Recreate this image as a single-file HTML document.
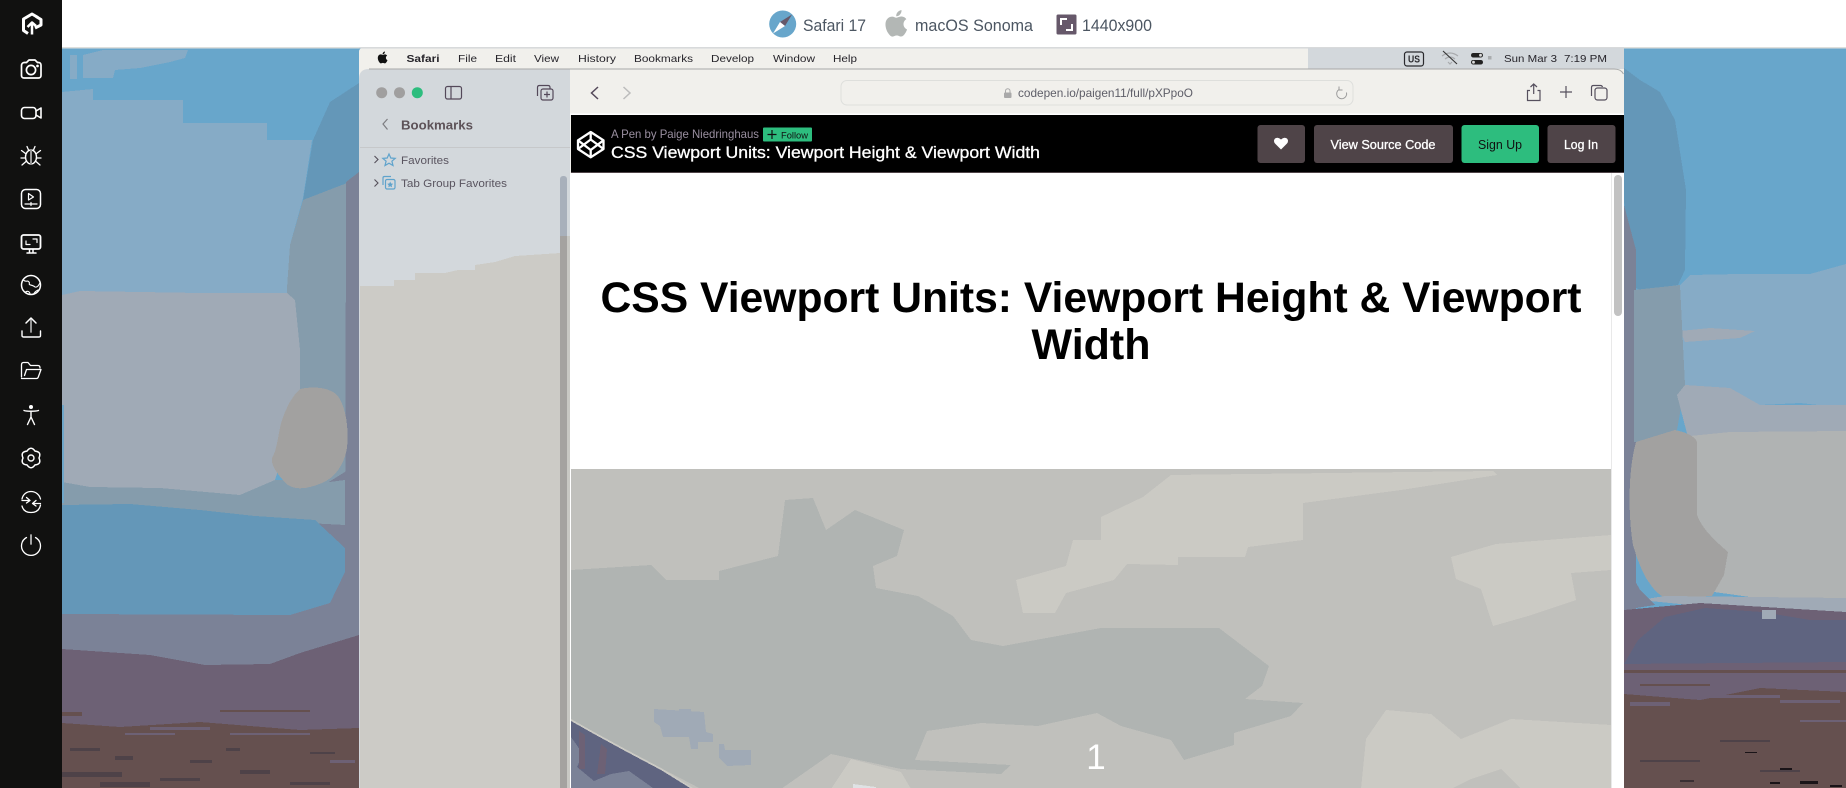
<!DOCTYPE html>
<html lang="en"><head><meta charset="utf-8"><title>Safari 17 macOS Sonoma</title>
<style>html,body{margin:0;padding:0;width:1846px;height:788px;overflow:hidden;background:#fff}svg{display:block}text{font-family:"Liberation Sans",sans-serif}</style></head>
<body>
<svg xmlns="http://www.w3.org/2000/svg" width="1846" height="788" viewBox="0 0 1846 788">
<!-- wallpaper -->
<rect x="62" y="48" width="1784" height="740" fill="#68a6cb"/>
<!-- left painting -->
<g shape-rendering="crispEdges">
<polygon fill="#86abc6" points="103,50 188,50 185,58 170,62 140,68 115,70 113,78 83,78 83,55"/>
<rect x="70" y="55" width="7" height="24" fill="#86abc6"/>
<polygon fill="#86abc6" points="62,92 93,89 93,100 183,100 183,123 267,123 267,140 312,140 303,198 290,245 287,288 287,300 62,300"/>
<polygon fill="#6497b8" points="359,83 330,102 313,140 303,200 359,200"/>
<polygon fill="#859cac" points="303,200 347,183 347,510 62,515 62,482 287,480 287,288 290,245"/>
<polygon fill="#7b8297" points="346,182 359,172 359,690 345,690"/>
<polygon fill="#7b8297" points="62,610 359,610 359,690 62,660"/>
<polygon fill="#7b8297" points="300,500 348,470 359,470 359,620 290,620"/>
<polygon fill="#a0aab6" points="62,295 80,291 200,293 287,293 295,300 300,350 300,400 275,480 240,495 160,488 90,487 62,482"/>
<path fill="#a2a1a0" d="M300 389C312 386 330 387 338 396 346 408 349 428 347 448 344 466 334 478 322 483 310 488 297 491 288 485 280 478 270 465 272 458 278 448 278 432 282 420 286 408 292 396 300 389Z"/>
<polygon fill="#859cac" points="62,482 90,487 160,488 240,495 322,483 345,480 345,525 62,510"/>
<path fill="#a2a1a0" d="M300 389C312 386 330 387 338 396 346 408 349 428 347 448 344 466 334 478 322 483 310 488 297 491 288 485 280 478 270 465 272 458 278 448 278 432 282 420 286 408 292 396 300 389Z"/>
<polygon fill="#6497b8" points="62,505 130,504 200,510 255,516 315,520 345,548 345,572 330,603 290,615 62,614"/>
<polygon fill="#6d6175" points="62,649 150,655 205,665 270,664 300,653 359,635 359,788 62,788"/>
<polygon fill="#65504f" points="62,723 120,727 200,722 300,730 359,728 359,788 62,788"/>
<rect x="62" y="712" width="20" height="4" fill="#65504f"/><rect x="220" y="710" width="90" height="2" fill="#65504f"/>
<rect x="150" y="727" width="60" height="3" fill="#6d6175"/><rect x="230" y="733" width="80" height="2" fill="#6d6175"/><rect x="125" y="733" width="50" height="2" fill="#6d6175"/><rect x="330" y="760" width="25" height="3" fill="#6d6175"/>
<rect x="70" y="748" width="30" height="3" fill="#4e4248"/><rect x="115" y="756" width="18" height="4" fill="#4e4248"/><rect x="190" y="760" width="22" height="3" fill="#4e4248"/><rect x="226" y="748" width="14" height="3" fill="#4e4248"/><rect x="62" y="772" width="60" height="5" fill="#4e4248"/><rect x="100" y="782" width="50" height="5" fill="#4e4248"/><rect x="160" y="778" width="40" height="3" fill="#4e4248"/><rect x="240" y="770" width="30" height="4" fill="#4e4248"/><rect x="290" y="782" width="40" height="3" fill="#4e4248"/><rect x="310" y="752" width="25" height="2" fill="#4e4248"/>
<rect x="62" y="405" width="2" height="98" fill="#6fa6c8"/>
<!-- right painting -->
<polygon fill="#6497b8" points="1624,68 1640,80 1660,92 1675,120 1686,190 1685,270 1678,285 1640,290 1630,285 1624,200"/>
<polygon fill="#86abc6" points="1680,285 1690,275 1740,274 1810,274 1846,264 1846,408 1800,403 1760,405 1730,388 1685,385"/>
<polygon fill="#a0aab6" points="1680,331 1710,328 1755,331 1740,338 1685,342"/>
<polygon fill="#7b8297" points="1624,205 1636,250 1636,640 1624,640"/>
<polygon fill="#859cac" points="1634,290 1680,285 1685,385 1677,430 1640,442 1634,442"/>
<polygon fill="#a0aab6" points="1677,395 1685,385 1730,388 1760,405 1846,405 1846,445 1690,445"/>
<polygon fill="#b0b3b3" points="1690,436 1730,432 1846,431 1846,600 1750,597 1700,590 1690,520"/>
<path fill="#a2a1a0" d="M1675 430C1685 432 1695 436 1697 442L1697 515C1702 530 1720 545 1728 552L1724 575 1712 596 1665 598C1650 590 1640 570 1633 545 1628 515 1628 470 1636 442Z"/>
<polygon fill="#a0aab6" points="1640,600 1665,596 1846,598 1846,618 1700,606"/>
<polygon fill="#7b8297" points="1624,560 1640,590 1655,605 1624,610"/>
<polygon fill="#6d6175" points="1624,610 1700,603 1846,612 1846,700 1624,700"/>
<polygon fill="#5f6480" points="1638,640 1665,617 1705,608 1762,612 1810,620 1846,620 1846,662 1624,664"/>
<rect x="1762" y="610" width="14" height="9" fill="#a0aab6"/>
<polygon fill="#65504f" points="1624,694 1700,700 1760,688 1846,692 1846,788 1624,788"/>
<rect x="1624" y="670" width="222" height="3" fill="#65504f"/><rect x="1640" y="684" width="70" height="2" fill="#65504f"/>
<rect x="1700" y="695" width="80" height="3" fill="#6d6175"/><rect x="1780" y="700" width="60" height="3" fill="#6d6175"/><rect x="1630" y="702" width="40" height="4" fill="#6d6175"/><rect x="1800" y="720" width="46" height="2" fill="#6d6175"/>
<rect x="1780" y="768" width="12" height="2" fill="#1a1418"/><rect x="1745" y="752" width="12" height="1" fill="#1a1418"/><rect x="1800" y="781" width="18" height="3" fill="#1a1418"/><rect x="1770" y="782" width="10" height="2" fill="#1a1418"/><rect x="1830" y="785" width="12" height="2" fill="#1a1418"/><rect x="1680" y="780" width="14" height="2" fill="#3a2f33"/><rect x="1640" y="760" width="60" height="2" fill="#4e4248"/><rect x="1720" y="740" width="50" height="2" fill="#4e4248"/><rect x="1760" y="770" width="40" height="2" fill="#4e4248"/>
</g>

<!-- top bar -->
<rect x="0" y="0" width="1846" height="47" fill="#fff"/>
<rect x="62" y="47" width="1784" height="1.5" fill="#dedfdc"/>
<circle cx="782.7" cy="24" r="13.5" fill="#68a6cb"/>
<polygon points="792,14.5 785,26 780,22" fill="#66586a"/><polygon points="773,33.5 780,22 785,26" fill="#fff"/>
<text x="803" y="31" font-size="16.5" fill="#4c5662" textLength="63" lengthAdjust="spacingAndGlyphs">Safari 17</text>
<g transform="translate(881.5,8) scale(1.29)" fill="#b3b7b5"><path d="M17.05 12.54c-.03-2.6 2.12-3.85 2.22-3.91-1.21-1.77-3.09-2.01-3.76-2.04-1.6-.16-3.12.94-3.93.94-.81 0-2.06-.92-3.39-.89-1.74.03-3.35 1.01-4.25 2.57-1.81 3.14-.46 7.8 1.3 10.35.86 1.25 1.89 2.65 3.24 2.6 1.3-.05 1.79-.84 3.36-.84s2.01.84 3.39.81c1.4-.02 2.28-1.27 3.14-2.53.99-1.45 1.4-2.85 1.42-2.93-.03-.01-2.72-1.04-2.74-4.13zM14.45 4.9c.72-.87 1.2-2.08 1.07-3.28-1.03.04-2.28.69-3.02 1.55-.66.77-1.24 2-1.09 3.18 1.15.09 2.33-.58 3.04-1.45z"/></g>
<text x="915" y="31" font-size="16.5" fill="#4c5662" textLength="118" lengthAdjust="spacingAndGlyphs">macOS Sonoma</text>
<rect x="1056.5" y="14.5" width="20" height="20" rx="1.5" fill="#66586a"/>
<path d="M1061 25V19H1067M1072 24V30H1066" fill="none" stroke="#fff" stroke-width="2"/>
<text x="1082" y="31" font-size="16.5" fill="#4c5662" textLength="70" lengthAdjust="spacingAndGlyphs">1440x900</text>

<!-- left dark rail -->
<rect x="0" y="0" width="62" height="788" fill="#111110"/>
<g fill="none" stroke="#fff" stroke-width="1.5" stroke-linecap="round" stroke-linejoin="round">
<path d="M38 17.5L32 14 23.5 19V30.5L28 33.5M35 28L41 25 41 19.5 36 16.5" stroke-width="3" stroke-linecap="butt"/>
<path d="M32 34.5V23M27.5 27L32 22.5 36 26" stroke-width="2.5" stroke-linecap="butt"/>
<path d="M24.5 62.5H26.5L29 60H35L37.5 62.5H38.5C40 62.5 41 63.5 41 65V75.5C41 77 40 78 38.5 78H24C22.5 78 21.5 77 21.5 75.5V65.5C21.5 63.5 23 62.5 24.5 62.5Z" stroke-width="1.7"/><circle cx="31" cy="70" r="4.6" stroke-width="1.7"/><circle cx="37.5" cy="66" r=".6" fill="#fff"/>
<rect x="21.5" y="107.5" width="14.5" height="11" rx="3" stroke-width="1.6"/><path d="M36 111L41 108V118L36 115" stroke-width="1.6"/>
<ellipse cx="31" cy="157" rx="5.5" ry="7" stroke-width="1.4"/><path d="M31 150V164" stroke="#9a9a9a" stroke-width="2"/><path d="M27 146.5L28.5 150M35 146.5L33.5 150M25.5 153.5L21.5 150.5M36.5 153.5L40.5 150.5M25.5 158H21M36.5 158H41M26 161.5L22 165M36 161.5L40 165" stroke-width="1.3"/>
<rect x="21.5" y="189.5" width="19" height="19" rx="4" stroke-width="1.5"/><path d="M28.5 193.5L33.5 197 28.5 200Z" stroke-width="1.2"/><path d="M25 204H37M31 202.5V205.5" stroke-width="1.2"/>
<rect x="21.5" y="235" width="19" height="14" rx="2" stroke-width="1.8"/><path d="M26 244.5H30M26 244.5V241M33 239H37V242.5" stroke-width="1.2"/><path d="M29.5 249.5V252.5M33 249.5V252.5M27 253H36" stroke-width="1.5"/>
<circle cx="31" cy="285" r="9.5" stroke-width="1.5"/><path d="M23.5 280C26 283 28 279 29.5 283 28 286 32 284 35 287 38 288 39 284 40 283M25.5 292.5C26 291 29 290.5 30 293.5M34 294C34 292 37 290.5 38 290" stroke-width="1.1"/>
<path d="M31 332V318.5" stroke="#a8a8a8" stroke-width="1.8"/><path d="M26 323L31 318 36 323" stroke-width="1.5"/><path d="M22 331V335.5C22 336.5 22.5 337 23.5 337H39C40 337 40.5 336.5 40.5 335.5V331" stroke-width="1.4"/>
<path d="M21.5 377V365C21.5 363.5 22.3 362.5 23.5 362.5H28L30.5 365.5H38C39.5 365.5 40 366.5 40 368" stroke-width="1.3"/><path d="M21.5 378.5H36.5C37.5 378.5 38 378 38.3 377L41 369.5H26.5L24.5 375.5" stroke-width="1.3"/>
<circle cx="31" cy="407" r="2" fill="#fff" stroke="none"/><path d="M24 410.5C27 411.5 35 411.5 38.5 410.5M31 411.5V417M31 417L27.5 424.5M31 417L34.5 424.5" stroke-width="1.4"/>
<path d="M27 451.1Q31 445.5 35 451.1Q41.8 451.75 39 458Q41.8 464.25 35 464.9Q31 470.5 27 464.9Q20.2 464.25 23 458Q20.2 451.75 27 451.1Z" stroke-width="1.5"/><circle cx="31" cy="458" r="3" stroke-width="1.4"/>
<path d="M22 499C23 494 27 491.5 31 491.5 36 491.5 39.5 495 40.5 499M40.5 505C39.5 510 36 512.5 31 512.5 26 512.5 23 510 22 506" stroke-width="1.3"/><path d="M22 500.5H30M26.5 497.5L30 500.5 26.5 503M40.5 503.5H32.5M36 500.5L32.5 503.5 36 506" stroke-width="1.3"/>
<path d="M26.5 537.5A9.5 9.5 0 1 0 35.5 537.5" stroke-width="1.3"/><path d="M31 535V544" stroke="#b5b5b5" stroke-width="1.8"/>
</g>

<!-- window: menu bar -->
<path d="M359 52Q359 48 363 48H1620Q1624 48 1624 52V788H359Z" fill="#f1f0ec"/>
<rect x="1308" y="48" width="316" height="21" fill="#d3d8dc"/>
<rect x="359" y="47.5" width="1265" height="1" fill="#d3d6da"/>
<g transform="translate(376,50.5) scale(.58)" fill="#111"><path d="M17.05 12.54c-.03-2.6 2.12-3.85 2.22-3.91-1.21-1.77-3.09-2.01-3.76-2.04-1.6-.16-3.12.94-3.93.94-.81 0-2.06-.92-3.39-.89-1.74.03-3.35 1.01-4.25 2.57-1.81 3.14-.46 7.8 1.3 10.35.86 1.25 1.89 2.65 3.24 2.6 1.3-.05 1.79-.84 3.36-.84s2.01.84 3.39.81c1.4-.02 2.28-1.27 3.14-2.53.99-1.45 1.4-2.85 1.42-2.93-.03-.01-2.72-1.04-2.74-4.13zM14.45 4.9c.72-.87 1.2-2.08 1.07-3.28-1.03.04-2.28.69-3.02 1.55-.66.77-1.24 2-1.09 3.18 1.15.09 2.33-.58 3.04-1.45z"/></g>
<g font-size="10.5" fill="#26242a">
<text x="406.5" y="62" font-weight="700" textLength="33" lengthAdjust="spacingAndGlyphs">Safari</text>
<text x="458" y="62" textLength="19" lengthAdjust="spacingAndGlyphs">File</text>
<text x="495" y="62" textLength="21" lengthAdjust="spacingAndGlyphs">Edit</text>
<text x="534" y="62" textLength="25" lengthAdjust="spacingAndGlyphs">View</text>
<text x="578" y="62" textLength="38" lengthAdjust="spacingAndGlyphs">History</text>
<text x="634" y="62" textLength="59" lengthAdjust="spacingAndGlyphs">Bookmarks</text>
<text x="711" y="62" textLength="43" lengthAdjust="spacingAndGlyphs">Develop</text>
<text x="773" y="62" textLength="42" lengthAdjust="spacingAndGlyphs">Window</text>
<text x="833" y="62" textLength="24" lengthAdjust="spacingAndGlyphs">Help</text>
<text x="1504" y="62" textLength="53" lengthAdjust="spacingAndGlyphs">Sun Mar 3</text>
<text x="1564" y="62" textLength="43" lengthAdjust="spacingAndGlyphs">7:19 PM</text>
</g>
<rect x="1404.5" y="52" width="19" height="14" rx="2.5" fill="none" stroke="#2a2a2e" stroke-width="1.2"/>
<text x="1408" y="62.5" font-size="10" font-weight="700" fill="#2a2a2e" textLength="12" lengthAdjust="spacingAndGlyphs">US</text>
<path d="M1442 56Q1450 50 1458 56M1445 59Q1450 55 1455 59M1448 62L1450 64 1452 62" fill="none" stroke="#a8aaad" stroke-width="1.2"/><path d="M1443 51L1457 64" stroke="#333" stroke-width="1.1"/>
<rect x="1471" y="53" width="12" height="4.5" rx="2.2" fill="#222"/><rect x="1471" y="60" width="12" height="4.5" rx="2.2" fill="#222"/><circle cx="1480.5" cy="55.2" r="1.4" fill="#ddd"/><circle cx="1473.5" cy="62.2" r="1.4" fill="#ddd"/>
<rect x="1488" y="56" width="3.5" height="3.5" fill="#a9acae"/>

<!-- window body -->
<path d="M359 79Q359 69 369 69H570V788H359Z" fill="#d3d8dc"/>
<path d="M570 69H1614Q1624 69 1624 79V114H570Z" fill="#f1f0ec"/>
<path d="M369 69H1614Q1621 69 1623.5 74" fill="none" stroke="#a8a9a9" stroke-width="1"/>
<polygon fill="#cccbc6" shape-rendering="crispEdges" points="360,286 394,286 394,280 415,280 415,273 445,273 458,270 475,270 475,265 495,262 515,256 560,253 560,788 360,788"/>
<circle cx="381.7" cy="92.7" r="5.5" fill="#a09f9f"/><circle cx="399.5" cy="92.7" r="5.5" fill="#a09f9f"/><circle cx="417.3" cy="92.7" r="5.5" fill="#2dbd7e"/>
<g fill="none" stroke="#54495a" stroke-width="1.2"><rect x="445.5" y="86.5" width="16" height="12.5" rx="2"/><path d="M451 87V99"/></g>
<g fill="none" stroke="#54495a" stroke-width="1.2"><path d="M537.5 96V87.5Q537.5 85.5 539.5 85.5H548Q550 85.5 550 87.5V88.5"/><rect x="541" y="89" width="12" height="11" rx="2"/><path d="M547 91.5V97.5M544 94.5H550"/></g>
<path d="M387.5 119L383 124 387.5 129.5" fill="none" stroke="#7c7c80" stroke-width="1.2"/>
<text x="401" y="129.5" font-size="13" font-weight="700" fill="#5d5258" textLength="72" lengthAdjust="spacingAndGlyphs">Bookmarks</text>
<rect x="360" y="147" width="210" height="1" fill="#c6c8ca"/>
<path d="M374.5 156L378 159.5 374.5 163M374.5 179.5L378 183 374.5 186.5" fill="none" stroke="#55505a" stroke-width="1.1"/>
<polygon points="389,154 390.8,158 395.2,158.4 391.9,161.2 393,165.5 389,163.2 385,165.5 386.1,161.2 382.8,158.4 387.2,158" fill="none" stroke="#5fa3cc" stroke-width="1.2"/>
<g fill="none" stroke="#5fa3cc" stroke-width="1.2"><path d="M383 185V178Q383 176.5 384.5 176.5H391"/><rect x="385.5" y="179.5" width="9.5" height="9.5" rx="1.5"/></g><polygon points="390.2,181.5 391.1,183.5 393.2,183.8 391.7,185.2 392.1,187.3 390.2,186.2 388.3,187.3 388.7,185.2 387.2,183.8 389.3,183.5" fill="#5fa3cc"/>
<text x="401" y="164" font-size="11" fill="#5a5560" textLength="48" lengthAdjust="spacingAndGlyphs">Favorites</text>
<text x="401" y="187" font-size="11" fill="#5a5560" textLength="106" lengthAdjust="spacingAndGlyphs">Tab Group Favorites</text>
<rect x="560" y="176" width="7" height="70" rx="3" fill="#a8b0bb"/><rect x="560" y="236" width="7" height="552" fill="#a4a2a0"/>
<rect x="567" y="236" width="3" height="552" fill="#c8c8c4"/>
<!-- toolbar -->
<path d="M598 87L591.5 93 598 99" fill="none" stroke="#54495a" stroke-width="1.5"/>
<path d="M623.5 87L630 93 623.5 99" fill="none" stroke="#bcbcbc" stroke-width="1.5"/>
<rect x="841" y="80.5" width="512" height="24.5" rx="6" fill="#f1f0ec" stroke="#dedfdc"/>
<rect x="1004" y="92.5" width="7.5" height="5.5" rx="1" fill="#a9a9a9"/><path d="M1005.5 92.5V91A2.2 2.2 0 0 1 1010 91V92.5" fill="none" stroke="#a9a9a9" stroke-width="1"/>
<text x="1018" y="97" font-size="12" fill="#5e5e68" textLength="175" lengthAdjust="spacingAndGlyphs">codepen.io/paigen11/full/pXPpoO</text>
<path d="M1339 89.5A5 5 0 1 0 1346.5 92.5M1339 86.5V90H1342.5" fill="none" stroke="#9a9a9a" stroke-width="1"/>
<g fill="none" stroke="#56505e" stroke-width="1.2"><path d="M1530 90.5H1527.5V100.5H1540V90.5H1537.5M1533.7 94V84M1530.5 87L1533.7 84 1537 87"/><path d="M1566 86V98M1560 92H1572"/><path d="M1591.5 96V87.5Q1591.5 85.5 1593.5 85.5H1600.5Q1602 85.5 1602.5 87"/><rect x="1595" y="88" width="12" height="12" rx="2.5"/></g>
<!-- codepen bar -->
<rect x="570" y="113.5" width="1054" height="1.5" fill="#fff"/>
<rect x="571" y="115" width="1053" height="57" fill="#000"/>
<rect x="571" y="172" width="1053" height="1" fill="#4f4448"/>
<g fill="none" stroke="#fff" stroke-width="2.3" stroke-linejoin="round"><path d="M590.7 132L603.5 140.3V149L590.7 157.3 578 149V140.3Z"/><path d="M590.7 132V139.5M590.7 150V157.3M578 140.3L590.7 150 603.5 140.3M578 149L590.7 139.5 603.5 149"/></g>
<text x="611" y="138" font-size="12" fill="#9a8fa0" textLength="148" lengthAdjust="spacingAndGlyphs">A Pen by Paige Niedringhaus</text>
<rect x="763" y="127.5" width="49" height="14" rx="1" fill="#2dbd7e"/>
<path d="M772 130V139M767.5 134.5H776.5" stroke="#111" stroke-width="1.2"/>
<text x="781" y="138.5" font-size="9.5" fill="#111" textLength="27" lengthAdjust="spacingAndGlyphs">Follow</text>
<text x="611" y="158" font-size="16.5" fill="#fff" stroke="#fff" stroke-width=".3" textLength="429" lengthAdjust="spacingAndGlyphs">CSS Viewport Units: Viewport Height &amp; Viewport Width</text>
<rect x="1257.5" y="125" width="47.5" height="38" rx="3" fill="#4f4448"/>
<path d="M1281 149.5L1275 143.5Q1273 141 1275 138.5 1278 136.5 1281 139.5 1284 136.5 1287 138.5 1289 141 1287 143.5Z" fill="#fff"/>
<rect x="1314" y="125" width="139" height="38" rx="3" fill="#4f4448"/>
<text x="1330.5" y="149" font-size="13" fill="#fff" stroke="#fff" stroke-width=".3" textLength="105" lengthAdjust="spacingAndGlyphs">View Source Code</text>
<rect x="1461.5" y="125" width="77.5" height="38" rx="3" fill="#2dbd7e"/>
<text x="1478" y="149" font-size="13" fill="#111" textLength="44" lengthAdjust="spacingAndGlyphs">Sign Up</text>
<rect x="1547.5" y="125" width="68" height="38" rx="3" fill="#4f4448"/>
<text x="1564" y="149" font-size="13" fill="#fff" stroke="#fff" stroke-width=".3" textLength="34" lengthAdjust="spacingAndGlyphs">Log In</text>

<!-- page content -->
<rect x="570" y="173" width="1054" height="615" fill="#fff"/>
<rect x="1611" y="173" width="1" height="615" fill="#e9e9e9"/>
<rect x="1614" y="175" width="8" height="141" rx="4" fill="#c2c2c2"/>
<text x="1091" y="312" font-size="43" font-weight="700" fill="#000" text-anchor="middle" textLength="981" lengthAdjust="spacingAndGlyphs">CSS Viewport Units: Viewport Height &amp; Viewport</text>
<text x="1091" y="359" font-size="43" font-weight="700" fill="#000" text-anchor="middle">Width</text>

<!-- hero image -->
<svg x="571" y="469" width="1040" height="319" viewBox="0 0 1040 319">
<rect width="1040" height="319" fill="#c0c0bc"/>
<g shape-rendering="crispEdges">
<polygon fill="#b0b4b2" points="0,101 80,96 95,111 148,111 148,102 207,87 214,31 242,29 255,61 284,41 333,61 326,87 302,97 305,119 347,127 382,147 400,171 432,177 530,159 648,159 698,197 691,217 674,230 732,234 720,247 663,264 663,276 613,291 600,271 550,257 526,244 467,257 410,254 356,262 344,291 440,296 430,305 330,300 260,285 210,320 130,320 0,252"/>
<polygon fill="#cbcac4" points="530,48 572,28 600,6 922,2 926,6 830,21 732,34 732,71 677,78 674,88 607,88 607,96 556,95 543,111 495,124 484,144 452,144 445,111 495,97 502,71 530,71"/>
<polygon fill="#cbcac4" points="880,88 925,75 1040,66 1040,101 1000,104 1005,131 957,147 922,157 910,120 885,110"/>
<polygon fill="#cbcac4" points="790,320 795,270 815,241 860,245 890,270 940,250 1040,256 1040,320 950,320 930,300 900,310 880,320"/>
<polygon fill="#cbcac4" points="260,320 280,290 330,303 340,320"/>
<polygon fill="#dfe2e4" points="282,315 305,318 305,320 282,320"/>
<polygon fill="#a0aab6" points="83,240 133,243 135,263 142,265 142,273 127,273 127,280 120,280 118,268 92,268 89,257 83,253"/><polygon fill="#a0aab6" points="148,275 153,275 154,281 180,281 180,296 156,297 148,289"/>
<polygon fill="#a0aab6" points="108,246 120,246 120,240 108,240"/>
<polygon fill="#5f6480" points="0,252 23,265 56,283 90,301 119,319 0,319"/>
<polygon fill="#7b8297" points="0,268 12,285 6,298 23,312 40,305 58,302 82,319 0,319"/>
<polygon fill="#6d6175" points="8,262 14,266 14,300 8,300"/><polygon fill="#6d6175" points="30,275 36,280 34,305 26,305"/>
<polygon fill="#cbcac4" points="0,250 23,263 56,281 90,299 122,319 119,319 90,301 56,283 23,265 0,252"/>
</g>
<text x="525" y="300" font-size="35" fill="#fff" text-anchor="middle">1</text>
</svg>
</svg>
</body></html>
